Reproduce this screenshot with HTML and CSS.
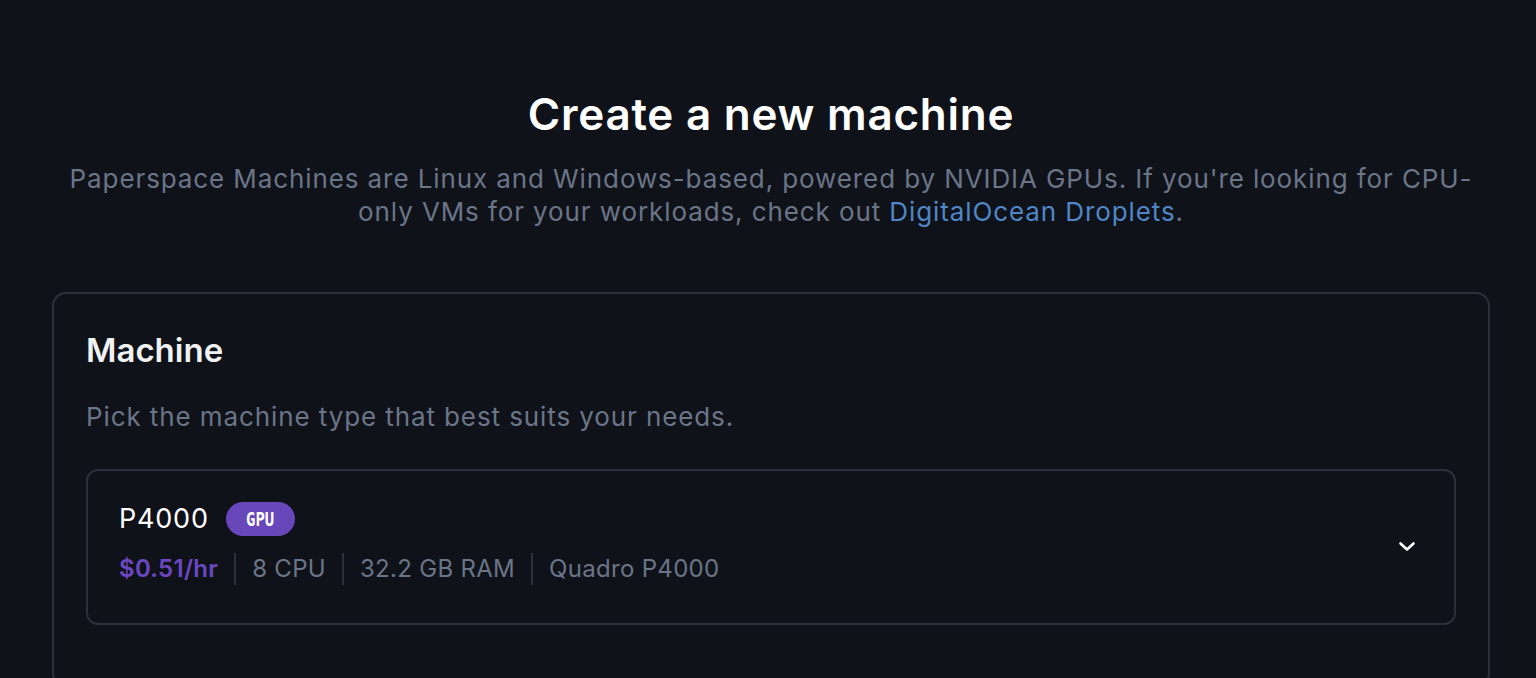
FILE: index.html
```html
<!DOCTYPE html>
<html lang="en">
<head>
<meta charset="utf-8">
<title>Create a new machine</title>
<link rel="stylesheet" href="styles.css">
</head>
<body>
<main class="page">
  <header class="intro">
    <h1 class="title">Create a new machine</h1>
    <p class="lead">Paperspace Machines are Linux and Windows-based, powered by NVIDIA GPUs. If you're looking for CPU-only VMs for your workloads, check out <a class="link" href="#">DigitalOcean Droplets</a>.</p>
  </header>
  <section class="card">
    <h2 class="card-title">Machine</h2>
    <p class="card-desc">Pick the machine type that best suits your needs.</p>
    <div class="select">
      <div class="select-main">
        <div class="select-name">
          <span class="name">P4000</span>
          <span class="badge"><span class="badge-text">GPU</span></span>
        </div>
        <div class="specs">
          <span class="spec price">$0.51/hr</span>
          <span class="spec">8 CPU</span>
          <span class="spec">32.2 GB RAM</span>
          <span class="spec">Quadro P4000</span>
        </div>
      </div>
      <svg class="chevron" width="20" height="20" viewBox="0 0 20 20" fill="none">
        <path d="M3.5 6.5 L10 12.5 L16.5 6.5" stroke="#ffffff" stroke-width="2.6" stroke-linecap="round" stroke-linejoin="round"/>
      </svg>
    </div>
  </section>
</main>
</body>
</html>
```
FILE: styles.css
```css
html, body {
  margin: 0;
  padding: 0;
  background: #101219;
}
body {
  font-family: Inter, "Noto Sans", sans-serif;
  color: #ffffff;
  overflow: hidden;
  height: 678px;
}
.page {
  width: 1438px;
  margin-left: 52px;
  padding-top: 86px;
}
.intro {
  text-align: center;
}
.title {
  margin: 0;
  font-size: 44px;
  font-weight: 600;
  line-height: 56px;
  letter-spacing: 0.75px;
  color: #ffffff;
}
.lead {
  margin: 20px auto 0;
  max-width: 1420px;
  font-size: 26px;
  line-height: 33px;
  color: #6b7588;
  letter-spacing: 0.9px;
}
.link {
  color: #4f86c6;
  text-decoration: none;
}
.card {
  margin-top: 64px;
  border: 2px solid #2d303b;
  border-radius: 14px;
  padding: 36px 32px 60px;
}
.card-title {
  margin: 0;
  font-size: 33px;
  font-weight: 600;
  line-height: 40px;
  color: #f0f1f3;
  letter-spacing: 0;
}
.card-desc {
  margin: 30px 0 0;
  font-size: 26px;
  line-height: 33px;
  color: #6b7588;
  letter-spacing: 0.9px;
}
.select {
  margin-top: 36px;
  height: 152px;
  border: 2px solid #2d303b;
  border-radius: 12px;
  display: flex;
  align-items: center;
  justify-content: space-between;
  padding: 0 37px 0 31px;
}
.select-main {
  display: flex;
  flex-direction: column;
  gap: 17px;
  padding-bottom: 7px;
}
.select-name {
  display: flex;
  align-items: center;
  gap: 17px;
  height: 34px;
}
.name {
  font-size: 27px;
  line-height: 34px;
  color: #ffffff;
  letter-spacing: 0.8px;
}
.badge {
  display: flex;
  align-items: center;
  justify-content: center;
  width: 69px;
  height: 34px;
  border-radius: 17px;
  background: #6747b9;
  overflow: hidden;
}
.badge-text {
  display: block;
  color: #ffffff;
  font-family: "DejaVu Sans Mono", monospace;
  font-weight: 700;
  font-size: 19px;
  line-height: 20px;
  transform: scaleX(0.82);
}
.specs {
  display: flex;
  align-items: center;
  height: 32px;
}
.spec {
  font-size: 24px;
  line-height: 32px;
  color: #6b7588;
  padding: 0 16px;
  border-left: 2px solid #2d303b;
  letter-spacing: 0.3px;
}
.spec:first-child {
  padding-left: 0;
  border-left: none;
}
.price {
  color: #6a48c2;
  font-weight: 600;
}
.chevron {
  display: block;
}
```
